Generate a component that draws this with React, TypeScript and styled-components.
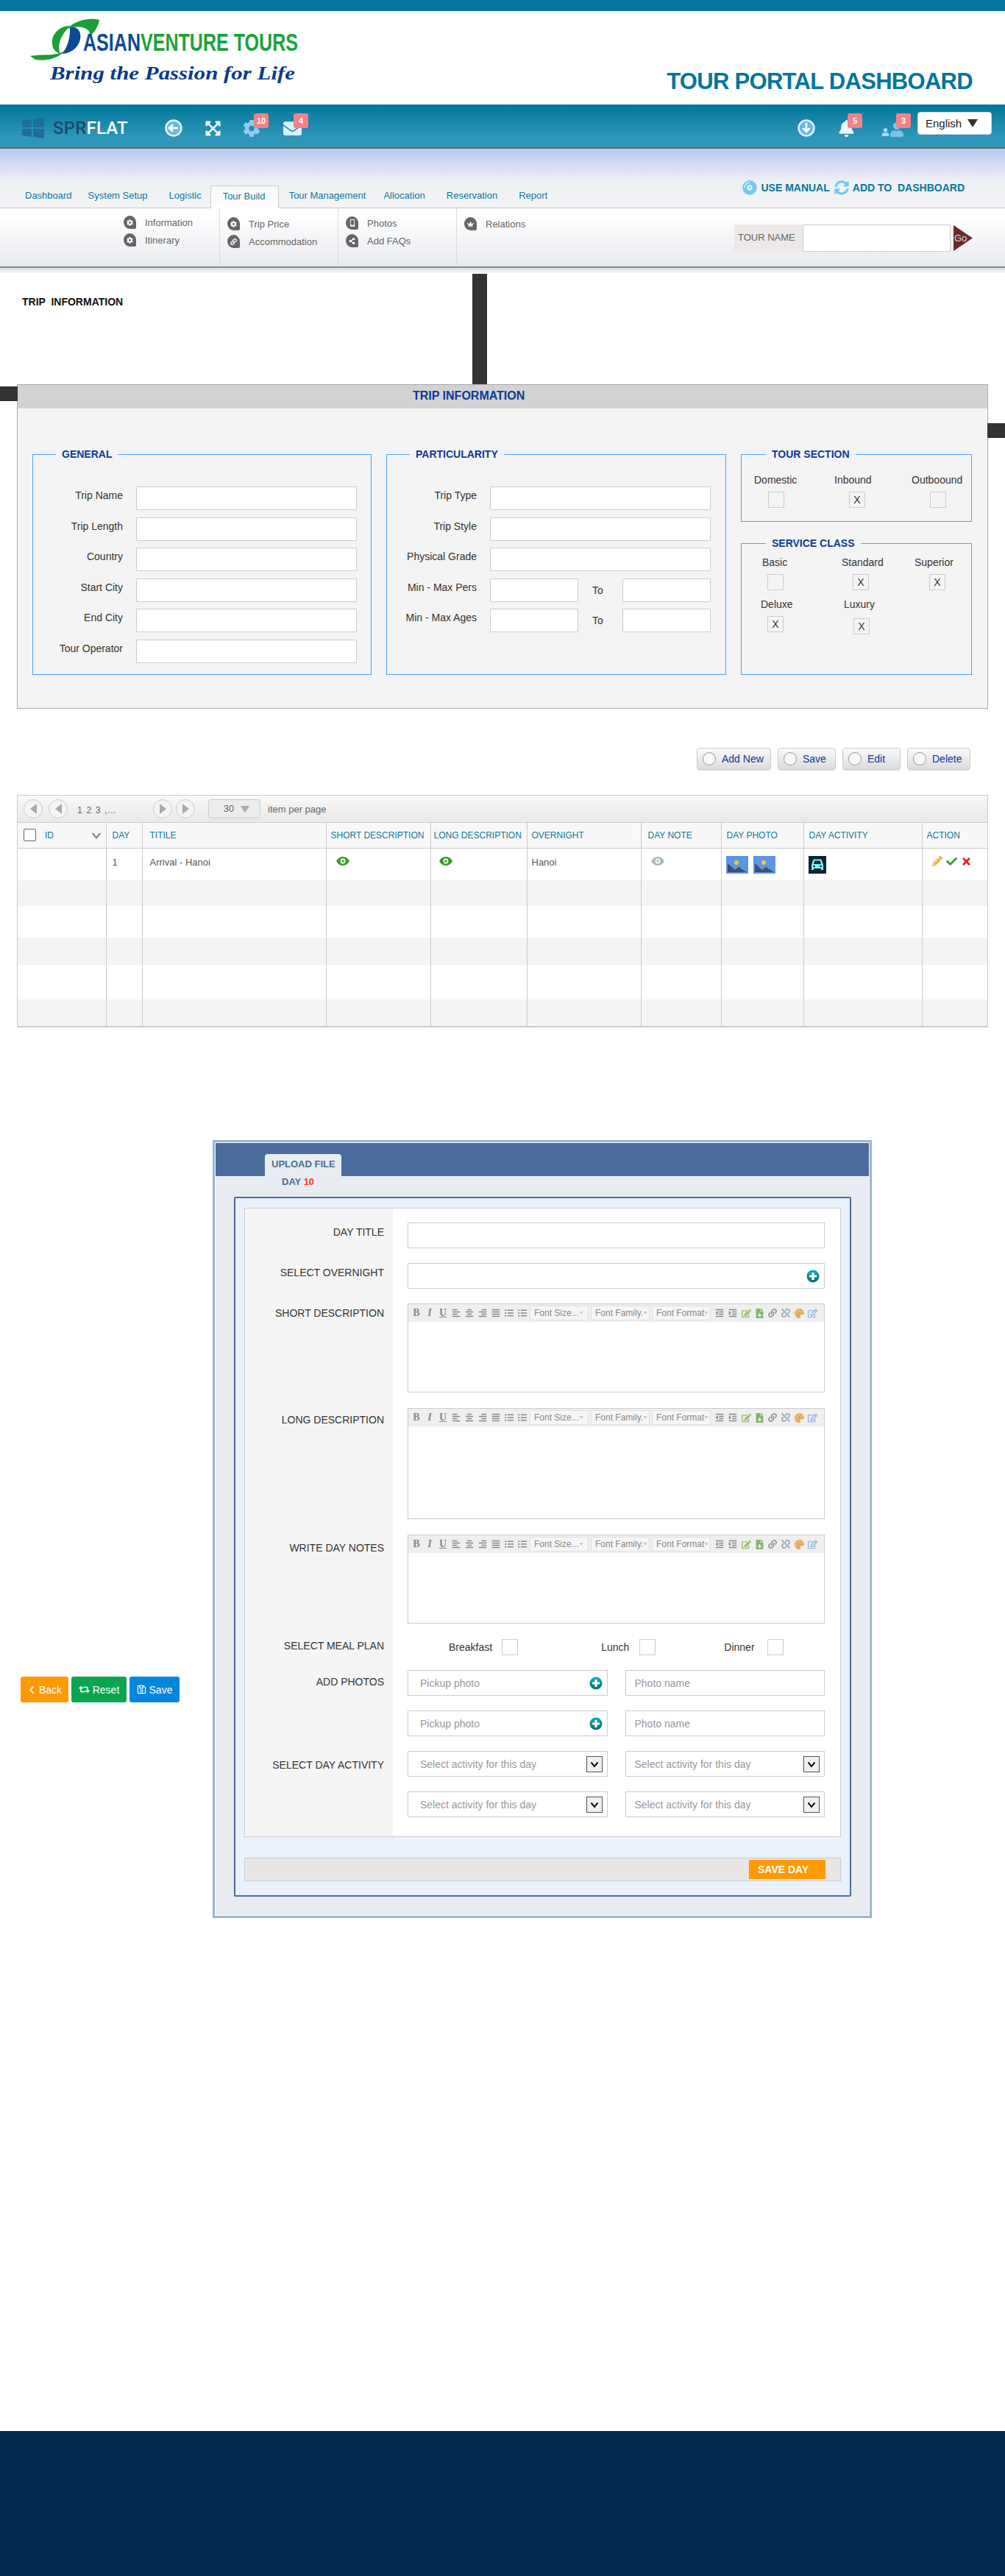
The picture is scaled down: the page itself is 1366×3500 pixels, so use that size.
import React from 'react';
import styled, { createGlobalStyle } from 'styled-components';
import {
  FaAlignCenter, FaAlignJustify, FaAlignLeft, FaAlignRight, FaBell, FaCheck, FaChevronLeft, FaCog,
  FaCompactDisc, FaCrown, FaEdit, FaEnvelope, FaExpandArrowsAlt, FaFileDownload, FaIndent, FaLink,
  FaListUl, FaMobileAlt, FaOutdent, FaPalette, FaPencilAlt, FaRegEdit, FaRegSave, FaRetweet,
  FaShareAlt, FaSyncAlt, FaTimes, FaUnlink, FaUser,
} from 'react-icons/fa';

const GlobalStyle = createGlobalStyle`
  html, body { margin: 0; padding: 0; background: #fff; }
  body { font-family: "Liberation Sans", Arial, sans-serif; color: #333; }
  * { box-sizing: border-box; }
`;

const TEAL = '#02769b';
const NAVY = '#0a3a9a';
const SLATE = '#4a6c9c';

/* ---------- header ---------- */
const TopStrip = styled.div`height: 15px; background: ${TEAL};`;

const BrandRow = styled.div`
  height: 127px;
  display: flex;
  justify-content: space-between;
  align-items: flex-end;
  padding-right: 44px;
`;

const PortalTitle = styled.h1`
  margin: 0 0 13px;
  font-size: 31px;
  line-height: 36px;
  letter-spacing: -0.7px;
  font-weight: 700;
  color: ${TEAL};
`;

const TopBar = styled.div`
  height: 60px;
  display: flex;
  align-items: center;
  padding: 8px 17px 2px 30px;
  background: linear-gradient(#02769b, #2e96b8 75%);
  border-bottom: 2px solid #666;
`;

const ProductName = styled.div`
  width: 96px;
  margin-left: 12px;
  font-family: Roboto, sans-serif;
  font-weight: 500;
  font-size: 24px;
  letter-spacing: 0.2px;
  color: #fff;
  span { color: #1d4a6e; }
`;

const IconSlot = styled.div<{ $w: number; $ml: number }>`
  position: relative;
  width: ${p => p.$w}px;
  height: 24px;
  margin-left: ${p => p.$ml}px;
  display: flex;
  align-items: center;
  justify-content: center;
  color: #c9ebfb;
`;

const Badge = styled.span<{ $left: number }>`
  position: absolute;
  top: -8px;
  left: ${p => p.$left}px;
  width: 20px;
  height: 20px;
  border-radius: 3px;
  background: #f58087;
  color: #fff;
  font-size: 11px;
  font-weight: 700;
  line-height: 20px;
  text-align: center;
`;

const SmallUser = styled(FaUser)`margin-top: 10px; flex: none;`;
const BigUser = styled(FaUser)`margin-top: 4px; flex: none;`;

const LangBox = styled.div`
  width: 101px;
  height: 31px;
  margin: -13px 0 0 19px;
  padding-left: 10px;
  display: flex;
  align-items: center;
  justify-content: space-between;
  padding-right: 18px;
  background: #fff;
  border: 1px solid #cfd8dc;
  border-radius: 4px;
  font-size: 15px;
  color: #222;
`;

const LangArrow = styled.i`
  width: 0;
  height: 0;
  border-left: 7px solid transparent;
  border-right: 7px solid transparent;
  border-top: 11px solid #333;
`;

/* ---------- navigation ---------- */
const NavStrip = styled.div`
  height: 81px;
  display: flex;
  align-items: flex-end;
  padding-left: 34px;
  background: linear-gradient(#b9c8ee, #eef0f5 55%, #f3f4f6);
  border-bottom: 1px solid #c8c8c8;
`;

const NavTab = styled.div<{ $ml: number; $active?: boolean }>`
  height: 31px;
  margin-left: ${p => p.$ml}px;
  margin-bottom: ${p => (p.$active ? '-1px' : '0')};
  width: ${p => (p.$active ? '93px' : 'auto')};
  padding-left: ${p => (p.$active ? '16px' : '0')};
  line-height: ${p => (p.$active ? '28px' : '29px')};
  font-size: 13px;
  color: #0a7a9b;
  white-space: nowrap;
  background: ${p => (p.$active ? 'linear-gradient(#f7f8fa, #fff)' : 'none')};
  border: ${p => (p.$active ? '1px solid #ccc' : 'none')};
  border-bottom: none;
  border-radius: 3px 3px 0 0;
`;

const ManualLinks = styled.div`
  margin: 0 55px 17px auto;
  height: 20px;
  display: flex;
  align-items: center;
  font-size: 14px;
  font-weight: 700;
  color: #05789b;
  white-space: pre;
  svg { color: #6ccbf2; margin-right: 5px; }
  span + svg { margin-left: 6px; }
`;

const SubBar = styled.div`
  height: 81px;
  display: flex;
  background: linear-gradient(#fff 10%, #e8eaef);
  border-bottom: 2px solid #888;
`;

const SubGroup = styled.div<{ $x: number; $w: number; $top: number; $rule?: boolean }>`
  width: ${p => p.$w}px;
  margin-left: ${p => p.$x}px;
  padding: ${p => p.$top}px 0 0 10px;
  border-left: ${p => (p.$rule ? '1px solid #dcdcdc' : 'none')};
`;

const SubItem = styled.div`
  height: 24px;
  display: flex;
  align-items: center;
  gap: 12px;
  font-size: 13px;
  color: #666;
  white-space: nowrap;
`;

const SubIcon = styled.span`
  width: 17px;
  height: 18px;
  flex: none;
  display: flex;
  align-items: center;
  justify-content: center;
  background: #666;
  color: #fff;
  border-radius: 50% 50% 2px 50%;
`;

const TourSearch = styled.div`
  margin: 22px 0 0 auto;
  padding-right: 44px;
  display: flex;
  align-items: flex-start;
`;

const TourLabel = styled.div`
  width: 93px;
  height: 37px;
  padding-left: 5px;
  background: #eee9e9;
  font-size: 13px;
  line-height: 36px;
  color: #666;
`;

const TourInput = styled.input`
  width: 201px;
  height: 37px;
  background: #fff;
  border: 1px solid #ccc;
  border-radius: 1px;
`;

const GoArrow = styled.div`
  position: relative;
  width: 26px;
  height: 35px;
  margin: 1px 0 0 4px;
  background: #6b2a2a;
  clip-path: polygon(0 0, 100% 50%, 0 100%);
  color: #ddd;
  font-size: 13px;
  line-height: 35px;
  padding-left: 1px;
`;

const NavFade = styled.div`height: 7px; background: linear-gradient(#dfe3e8, #f4f5f7);`;

/* ---------- trip information ---------- */
const InfoHead = styled.div`
  position: relative;
  height: 151px;
  padding: 30px 0 0 30px;
  font-size: 14px;
  font-weight: 700;
  line-height: 18px;
  color: #111;
  white-space: pre;
`;

const DarkPost = styled.i`
  position: absolute;
  left: 642px;
  top: 1px;
  width: 20px;
  height: 150px;
  background: #333;
`;

const Panel = styled.section`
  position: relative;
  margin: 0 23px;
  height: 441px;
  background: #f4f4f4;
  border: 1px solid #aaa;
  &::before, &::after {
    content: '';
    position: absolute;
    width: 24px;
    height: 20px;
    background: #333;
  }
  &::before { left: -24px; top: 2px; }
  &::after { right: -24px; top: 52px; }
`;

const PanelTitle = styled.h2`
  margin: 0;
  height: 32px;
  padding-left: 537px;
  background: #d2d2d2;
  color: #0a3a9a;
  font-size: 16px;
  line-height: 29px;
`;

const GroupRow = styled.div`
  display: flex;
  gap: 20px;
  padding: 62px 0 0 20px;
`;

const Group = styled.div<{ $w: number; $h: number; $top: number }>`
  position: relative;
  width: ${p => p.$w}px;
  height: ${p => p.$h}px;
  padding-top: ${p => p.$top}px;
  border: 1px solid #4aa3ff;
`;

const Legend = styled.span<{ $left?: number }>`
  position: absolute;
  top: -10px;
  left: ${p => p.$left ?? 31}px;
  padding: 0 8px;
  background: #f4f4f4;
  color: #0a3a9a;
  font-size: 14px;
  font-weight: 700;
  line-height: 18px;
  white-space: nowrap;
`;

const FieldRows = styled.div`display: flex; flex-direction: column; gap: 9.6px;`;

const FieldRow = styled.div`display: flex; height: 32px; align-items: flex-start;`;

const FieldLabel = styled.label`
  width: 122px;
  margin-right: 18px;
  font-size: 14px;
  line-height: 24px;
  text-align: right;
  color: #333;
  white-space: nowrap;
`;

const TextInput = styled.input<{ $w: number }>`
  width: ${p => p.$w}px;
  height: 32px;
  background: #fff;
  border: 1px solid #ccc;
  border-radius: 1px;
`;

const ToLabel = styled.span`
  width: 60px;
  padding-left: 19px;
  font-size: 14px;
  line-height: 32px;
`;

const SideCol = styled.div`display: flex; flex-direction: column; gap: 29px;`;

const CheckGrid = styled.div`
  display: grid;
  grid-template-columns: 111px 110px 92px;
  row-gap: 10px;
`;

const CheckCell = styled.div<{ $label: number; $box: number; $gap?: number }>`
  font-size: 14px;
  line-height: 18px;
  color: #333;
  white-space: nowrap;
  span { display: block; margin-left: ${p => p.$label}px; }
  b {
    display: block;
    width: 22px;
    height: 22px;
    margin: ${p => p.$gap ?? 7}px 0 0 ${p => p.$box}px;
    border: 1px solid #ccc;
    font-size: 14px;
    font-weight: 400;
    line-height: 20px;
    text-align: center;
  }
`;

/* ---------- day table ---------- */
const ActionBar = styled.div`
  display: flex;
  justify-content: flex-end;
  gap: 9px;
  margin-top: 53px;
  padding-right: 47px;
`;

const ActionButton = styled.button<{ $w: number }>`
  width: ${p => p.$w}px;
  height: 30px;
  display: flex;
  align-items: center;
  gap: 8px;
  padding: 0 0 0 7px;
  background: linear-gradient(#fafafa, #dcdcdc);
  border: 1px solid #ccc;
  border-radius: 4px;
  box-shadow: 0 1px 1px rgba(0, 0, 0, 0.12);
  color: ${NAVY};
  font: 14px "Liberation Sans", Arial, sans-serif;
  i { width: 18px; height: 18px; border: 1px solid #999; border-radius: 50%; background: #f8f8f8; }
`;

const TableWrap = styled.div`
  margin: 34px 23px 0;
  border: 1px solid #ccc;
  border-bottom: 2px solid #ccc;
`;

const Pager = styled.div`
  height: 37px;
  display: flex;
  align-items: center;
  padding-left: 8px;
  background: linear-gradient(#f9f9f9, #e8e8e8);
  border-bottom: 1px solid #ccc;
  font-size: 12.5px;
  color: #666;
`;

const PageArrow = styled.span<{ $ml: number; $next?: boolean }>`
  width: 26px;
  height: 26px;
  margin-left: ${p => p.$ml}px;
  display: flex;
  align-items: center;
  justify-content: center;
  border: 1px solid #ccc;
  border-radius: 50%;
  background: #f4f4f4;
  &::before {
    content: '';
    border-top: 7px solid transparent;
    border-bottom: 7px solid transparent;
    border-${p => (p.$next ? 'left' : 'right')}: 9px solid #aaa;
  }
`;

const PageNumbers = styled.span`
  width: 103px;
  margin: 4px 0 0 13px;
  letter-spacing: 0.5px;
  word-spacing: 1px;
`;

const PageSize = styled.span`
  width: 71px;
  height: 26px;
  margin-left: 18px;
  padding: 0 14px 0 20px;
  display: flex;
  align-items: center;
  justify-content: space-between;
  border: 1px solid #ccc;
  border-radius: 4px;
  background: #ececec;
  &::after {
    content: '';
    border-left: 6px solid transparent;
    border-right: 6px solid transparent;
    border-top: 9px solid #aaa;
  }
`;

const PageLabel = styled.span`margin-left: 10px; font-size: 13px;`;

const DayTable = styled.table`
  width: 100%;
  table-layout: fixed;
  border-collapse: collapse;
`;

const HeadCell = styled.th<{ $pad: number }>`
  height: 34px;
  padding: 0 0 0 ${p => p.$pad}px;
  background: #f8f8f8;
  border-left: 1px solid #ccc;
  border-bottom: 1px solid #ccc;
  color: #0a7b9b;
  font-size: 12px;
  font-weight: 400;
  text-align: left;
  white-space: nowrap;
  &:first-child { border-left: none; }
`;

const IdHead = styled.div`
  display: flex;
  align-items: center;
  i { width: 17px; height: 17px; margin-right: 12px; background: #fff; border: 1px solid #666; border-radius: 2px; }
  svg { margin-left: auto; margin-right: 6px; }
`;

const DayRow = styled.tr<{ $h: number; $alt: boolean }>`
  height: ${p => p.$h}px;
  background: ${p => (p.$alt ? '#f4f4f4' : '#fff')};
`;

const DayCell = styled.td<{ $pad?: number }>`
  padding: 10px 0 0 ${p => p.$pad ?? 0}px;
  vertical-align: top;
  border-left: 1px solid #ccc;
  font-size: 13px;
  line-height: 18px;
  color: #555;
  &:first-child { border-left: none; }
`;

const CellIcons = styled.div<{ $gap?: number }>`
  display: flex;
  align-items: center;
  gap: ${p => p.$gap ?? 7}px;
`;

/* ---------- day form ---------- */
const FormSection = styled.div`
  display: flex;
  margin-top: 153px;
`;

const SideButtons = styled.div`
  width: 289px;
  padding: 729px 0 0 28px;
  display: flex;
  gap: 4px;
  align-items: flex-start;
`;

const SideButton = styled.button<{ $bg: string; $w: number }>`
  width: ${p => p.$w}px;
  height: 35px;
  display: flex;
  align-items: center;
  justify-content: center;
  gap: 4px;
  padding: 0;
  border: none;
  border-radius: 3px;
  background: ${p => p.$bg};
  color: #fff;
  font: 14px "Liberation Sans", Arial, sans-serif;
`;

const FormOuter = styled.div`
  width: 896px;
  height: 1057px;
  border: 3px solid #9ab4d0;
  background: #e8ecf0;
  box-shadow: inset 0 0 0 1px #fff;
  padding: 1px;
`;

const FormHead = styled.div`
  height: 45px;
  padding-left: 67px;
  display: flex;
  align-items: flex-end;
  background: ${SLATE};
`;

const UploadTab = styled.div`
  width: 104px;
  height: 30px;
  padding-left: 9px;
  border-radius: 4px 4px 0 0;
  background: #e8ecf0;
  color: ${SLATE};
  font-size: 13px;
  font-weight: 700;
  line-height: 28px;
`;

const DayLine = styled.div`
  height: 28px;
  padding-left: 90px;
  color: ${SLATE};
  font-size: 13px;
  font-weight: 700;
  line-height: 16px;
  span { color: #f33; }
`;

const FormBox = styled.div`
  width: 839px;
  height: 951px;
  margin-left: 25px;
  padding: 13px 12px 0;
  background: #e8f1fc;
  border: 2px solid ${SLATE};
  border-radius: 2px;
`;

const FormPanel = styled.div`
  height: 855px;
  background: #fff;
  border: 1px solid #ccc;
  display: flex;
  flex-direction: column;
`;

const FormRow = styled.div<{ $grow?: boolean }>`
  display: grid;
  grid-template-columns: 201px 1fr;
  flex-grow: ${p => (p.$grow ? 1 : 0)};
`;

const RowLabel = styled.div<{ $top: number; $pad: number }>`
  padding: ${p => p.$pad + p.$top}px 12px 0 0;
  background: #f5f5f5;
  font-size: 14px;
  line-height: 18px;
  color: #333;
  text-align: right;
`;

const RowBody = styled.div<{ $pad: number }>`
  padding: ${p => p.$pad}px 21px 0 20px;
  display: flex;
  flex-direction: column;
  gap: 20px;
`;

const WideInput = styled.div<{ $left?: number }>`
  position: relative;
  height: 35px;
  padding: 0 6px 0 ${p => p.$left ?? 12}px;
  display: flex;
  align-items: center;
  justify-content: space-between;
  background: #fff;
  border: 1px solid #ccc;
  font-size: 14px;
  color: #999;
`;

const Pair = styled.div`
  display: grid;
  grid-template-columns: 1fr 1fr;
  column-gap: 24px;
`;

const SelectButton = styled.span`
  width: 22px;
  height: 22px;
  display: flex;
  align-items: center;
  justify-content: center;
  background: #f0f0f0;
  border: 1px solid #555;
  color: #111;
`;

const Editor = styled.div<{ $h: number }>`
  height: ${p => p.$h}px;
  border: 1px solid #ccc;
  background: #fff;
`;

const EditorBar = styled.div`
  height: 24px;
  display: flex;
  align-items: center;
  padding-left: 2px;
  background: #efefef;
`;

const ToolSlot = styled.span<{ $c?: string }>`
  width: 18px;
  height: 18px;
  flex: none;
  display: flex;
  align-items: center;
  justify-content: center;
  color: ${p => p.$c ?? '#888'};
  font-family: "Liberation Serif", serif;
  font-weight: 700;
  font-size: 14px;
`;

const ToolSelect = styled.span`
  width: 80px;
  height: 20px;
  margin: 0 3px 0 0;
  padding: 0 6px 0 5px;
  display: flex;
  align-items: center;
  justify-content: space-between;
  background: #f6f6f6;
  border: 1px solid #e0e0e0;
  color: #888;
  font-size: 12px;
  white-space: nowrap;
  &:nth-child(10) { margin-left: 1px; }
  &::after {
    content: '';
    border-left: 3px solid transparent;
    border-right: 3px solid transparent;
    border-top: 4px solid #ccc;
  }
`;

const MealRow = styled.div`display: flex; height: 22px; align-items: center;`;

const MealItem = styled.div<{ $ml: number; $gap: number }>`
  display: flex;
  align-items: center;
  gap: ${p => p.$gap}px;
  margin-left: ${p => p.$ml}px;
  font-size: 14px;
  color: #333;
  i { width: 22px; height: 22px; border: 1px solid #ccc; }
`;

const SaveBar = styled.div`
  height: 32px;
  margin-top: 28px;
  padding-right: 20px;
  display: flex;
  align-items: center;
  justify-content: flex-end;
  background: #e9e6e6;
  border: 1px solid #ccc;
`;

const SaveDay = styled.button`
  width: 104px;
  height: 26px;
  padding: 0 0 0 12px;
  border: none;
  background: #f90;
  color: #fff;
  font: 700 14px "Liberation Sans", Arial, sans-serif;
  text-align: left;
`;

const Footer = styled.footer`
  height: 197px;
  margin-top: 697px;
  background: #022b4f;
`;

/* ---------- drawings ---------- */
const Logo = () => (
  <svg width="420" height="127" viewBox="0 0 420 127">
    <path d="M96 20C80 20 70 32 71 44c0 8 5 12 11 14-4-8-2-24 14-38z" fill="#1a9e35" />
    <path d="M95 22c13-2 17 10 13 20-4 10-14 16-24 16 8-8 12-24 11-36z" fill="#0a4a96" />
    <path d="M92 24c8-10 28-16 43-12-1 8-7 18-13 22 2-10-12-16-30-10z" fill="#1a9e35" />
    <path d="M41 61c19-3 34 1 47-7-10 12-28 14-40 12z" fill="#1a9e35" />
    <text transform="translate(113 54) scale(0.76 1)" fill="#1aa33a" fontFamily="Liberation Sans, Arial, sans-serif"
      fontWeight="700" fontSize="33"><tspan fill="#0a4a96">ASIAN</tspan>VENTURE TOURS</text>
    <text x="68" y="93" fill="#0a3a8c" fontFamily="Liberation Serif, serif" fontWeight="700" fontStyle="italic"
      fontSize="25" textLength="333" lengthAdjust="spacingAndGlyphs">Bring the Passion for Life</text>
  </svg>
);

const WindowsMark = () => (
  <svg width="30" height="28" viewBox="0 0 30 28" fill="#1e6d9c">
    <path d="M0 4l13-2v11H0zM15 2l15-2v13H15zM0 15h13v11L0 24zM15 15h15v13l-15-2z" />
  </svg>
);

const RoundArrow = ({ down }: { down?: boolean }) => (
  <svg width="24" height="24" viewBox="0 0 24 24">
    <circle cx="12" cy="12" r="10.5" fill="#6fb6e6" stroke="#e2f3fd" strokeWidth="2.4" />
    <path d={down ? 'M12 5v10M7.5 12l4.500 5 4.500-5' : 'M18 12H8M11 7.500l-5 4.500 5 4.500'} stroke="#fff" strokeWidth="2.6" fill="none" />
  </svg>
);

const Eye = ({ pale }: { pale?: boolean }) => (
  <svg width="18" height="14" viewBox="0 0 18 14">
    <path d="M0 7c4-8 14-8 18 0-4 8-14 8-18 0z" fill={pale ? '#a6c0a6' : '#3a9a28'} />
    <circle cx="9" cy="7" r="3.400" fill="#fff" />
    <circle cx="9" cy="7" r="1.700" fill={pale ? '#a6c0a6' : '#3a9a28'} />
  </svg>
);

const PhotoTile = () => (
  <svg width="30" height="24" viewBox="0 0 30 24">
    <rect width="30" height="24" fill="#5b95e6" />
    <circle cx="14" cy="9" r="3" fill="#ffc62e" />
    <path d="M2 22V10l10 9 5-4 11 7z" fill="#44506a" />
  </svg>
);

const CarTile = () => (
  <svg width="24" height="24" viewBox="0 0 24 24">
    <rect width="24" height="24" fill="#0f2339" />
    <path d="M4 12l2-6c.3-1 1-1.500 2-1.500h8c1 0 1.700.5 2 1.500l2 6v7h-3v-2H7v2H4z" fill="#7ff0f5" />
    <path d="M7 11l1.200-4.500h7.600L17 11z" fill="#0f2339" />
    <circle cx="7.500" cy="14" r="1.300" fill="#0f2339" />
    <circle cx="16.500" cy="14" r="1.300" fill="#0f2339" />
  </svg>
);

const PlusDot = () => (
  <svg width="18" height="18" viewBox="0 0 18 18">
    <defs>
      <linearGradient id="plusFill" x1="0" y1="0" x2="0" y2="1">
        <stop offset="0" stopColor="#10b5b0" />
        <stop offset="1" stopColor="#036b6e" />
      </linearGradient>
    </defs>
    <circle cx="9" cy="9" r="8.500" fill="url(#plusFill)" />
    <path d="M9 4v10M4 9h10" stroke="#fff" strokeWidth="3.200" />
  </svg>
);

const Chevron = ({ size = 12, color = 'currentColor' }: { size?: number; color?: string }) => (
  <svg width={size} height={size} viewBox="0 0 12 12">
    <path d="M1.500 3.500L6 9l4.500-5.500" fill="none" stroke={color} strokeWidth="2" />
  </svg>
);

/* ---------- data ---------- */
const generalFields = ['Trip Name', 'Trip Length', 'Country', 'Start City', 'End City', 'Tour Operator'];

const headCols = [
  { w: 120, pad: 8, label: '' },
  { w: 49, pad: 8, label: 'DAY' },
  { w: 250, pad: 10, label: 'TITILE' },
  { w: 142, pad: 6, label: 'SHORT DESCRIPTION' },
  { w: 131, pad: 4, label: 'LONG DESCRIPTION' },
  { w: 155, pad: 6, label: 'OVERNIGHT' },
  { w: 109, pad: 9, label: 'DAY NOTE' },
  { w: 112, pad: 7, label: 'DAY PHOTO' },
  { w: 161, pad: 7, label: 'DAY ACTIVITY' },
  { w: 89, pad: 6, label: 'ACTION' },
];

const emptyRows = [35, 43, 37, 47, 36];

const RichEditor = ({ height }: { height: number }) => (
  <Editor $h={height}>
    <EditorBar>
      <ToolSlot>B</ToolSlot>
      <ToolSlot><i>I</i></ToolSlot>
      <ToolSlot><u>U</u></ToolSlot>
      <ToolSlot><FaAlignLeft size={12} /></ToolSlot>
      <ToolSlot><FaAlignCenter size={12} /></ToolSlot>
      <ToolSlot><FaAlignRight size={12} /></ToolSlot>
      <ToolSlot><FaAlignJustify size={12} /></ToolSlot>
      <ToolSlot><FaListUl size={12} /></ToolSlot>
      <ToolSlot><FaListUl size={12} /></ToolSlot>
      <ToolSelect>Font Size...</ToolSelect>
      <ToolSelect>Font Family.</ToolSelect>
      <ToolSelect>Font Format</ToolSelect>
      <ToolSlot><FaOutdent size={12} /></ToolSlot>
      <ToolSlot><FaIndent size={12} /></ToolSlot>
      <ToolSlot $c="#9bbf6a"><FaEdit size={13} /></ToolSlot>
      <ToolSlot $c="#7fb56a"><FaFileDownload size={13} /></ToolSlot>
      <ToolSlot $c="#999"><FaLink size={12} /></ToolSlot>
      <ToolSlot $c="#9ab"><FaUnlink size={12} /></ToolSlot>
      <ToolSlot $c="#e8a860"><FaPalette size={13} /></ToolSlot>
      <ToolSlot $c="#7fb0e0"><FaRegEdit size={13} /></ToolSlot>
    </EditorBar>
  </Editor>
);

const App: React.FC = () => (
  <>
    <GlobalStyle />
    <TopStrip />
    <BrandRow>
      <Logo />
      <PortalTitle>TOUR PORTAL DASHBOARD</PortalTitle>
    </BrandRow>
    <TopBar>
      <WindowsMark />
      <ProductName><span>SPR</span>FLAT</ProductName>
      <IconSlot $w={24} $ml={56}><RoundArrow /></IconSlot>
      <IconSlot $w={24} $ml={29}><FaExpandArrowsAlt size={23} color="#eaf7fd" /></IconSlot>
      <IconSlot $w={24} $ml={29}><FaCog size={25} color="#8ccdf0" /><Badge $left={15}>10</Badge></IconSlot>
      <IconSlot $w={25} $ml={31}><FaEnvelope size={25} color="#d6f0fc" /><Badge $left={14}>4</Badge></IconSlot>
      <IconSlot $w={24} $ml={674}><RoundArrow down /></IconSlot>
      <IconSlot $w={24} $ml={30}><FaBell size={23} color="#eaf7fd" /><Badge $left={14}>5</Badge></IconSlot>
      <IconSlot $w={29} $ml={37}>
        <SmallUser size={11} color="#a9dcf7" />
        <BigUser size={20} color="#7cc2ee" />
        <Badge $left={19}>3</Badge>
      </IconSlot>
      <LangBox>English<LangArrow /></LangBox>
    </TopBar>
    <NavStrip>
      <NavTab $ml={0}>Dashboard</NavTab>
      <NavTab $ml={22}>System Setup</NavTab>
      <NavTab $ml={29}>Logistic</NavTab>
      <NavTab $ml={12} $active>Tour Build</NavTab>
      <NavTab $ml={14}>Tour Management</NavTab>
      <NavTab $ml={24}>Allocation</NavTab>
      <NavTab $ml={29}>Reservation</NavTab>
      <NavTab $ml={29}>Report</NavTab>
      <ManualLinks>
        <FaCompactDisc size={20} />
        <span>USE MANUAL</span>
        <FaSyncAlt size={20} />
        <span>ADD TO  DASHBOARD</span>
      </ManualLinks>
    </NavStrip>
    <SubBar>
      <SubGroup $x={158} $w={130} $top={7}>
        <SubItem><SubIcon><FaCog size={9} /></SubIcon>Information</SubItem>
        <SubItem><SubIcon><FaCog size={9} /></SubIcon>Itinerary</SubItem>
      </SubGroup>
      <SubGroup $x={10} $w={161} $top={9} $rule>
        <SubItem><SubIcon><FaCog size={9} /></SubIcon>Trip Price</SubItem>
        <SubItem><SubIcon><FaLink size={9} /></SubIcon>Accommodation</SubItem>
      </SubGroup>
      <SubGroup $x={0} $w={161} $top={8} $rule>
        <SubItem><SubIcon><FaMobileAlt size={10} /></SubIcon>Photos</SubItem>
        <SubItem><SubIcon><FaShareAlt size={9} /></SubIcon>Add FAQs</SubItem>
      </SubGroup>
      <SubGroup $x={0} $w={160} $top={9} $rule>
        <SubItem><SubIcon><FaCrown size={9} /></SubIcon>Relations</SubItem>
      </SubGroup>
      <TourSearch>
        <TourLabel>TOUR NAME</TourLabel>
        <TourInput />
        <GoArrow>Go</GoArrow>
      </TourSearch>
    </SubBar>
    <NavFade />
    <InfoHead>
      TRIP  INFORMATION
      <DarkPost />
    </InfoHead>
    <Panel>
      <PanelTitle>TRIP INFORMATION</PanelTitle>
      <GroupRow>
        <Group $w={461} $h={300} $top={43}>
          <Legend>GENERAL</Legend>
          <FieldRows>
            {generalFields.map(name => (
              <FieldRow key={name}>
                <FieldLabel>{name}</FieldLabel>
                <TextInput $w={300} />
              </FieldRow>
            ))}
          </FieldRows>
        </Group>
        <Group $w={462} $h={300} $top={43}>
          <Legend>PARTICULARITY</Legend>
          <FieldRows>
            {['Trip Type', 'Trip Style', 'Physical Grade'].map(name => (
              <FieldRow key={name}>
                <FieldLabel>{name}</FieldLabel>
                <TextInput $w={300} />
              </FieldRow>
            ))}
            {['Min - Max Pers', 'Min - Max Ages'].map(name => (
              <FieldRow key={name}>
                <FieldLabel>{name}</FieldLabel>
                <TextInput $w={120} />
                <ToLabel>To</ToLabel>
                <TextInput $w={120} />
              </FieldRow>
            ))}
          </FieldRows>
        </Group>
        <SideCol>
          <Group $w={314} $h={92} $top={25}>
            <Legend $left={33}>TOUR SECTION</Legend>
            <CheckGrid>
              <CheckCell $label={17} $box={36}><span>Domestic</span><b /></CheckCell>
              <CheckCell $label={15} $box={35}><span>Inbound</span><b>X</b></CheckCell>
              <CheckCell $label={10} $box={35}><span>Outboound</span><b /></CheckCell>
            </CheckGrid>
          </Group>
          <Group $w={314} $h={179} $top={16}>
            <Legend $left={33}>SERVICE CLASS</Legend>
            <CheckGrid>
              <CheckCell $label={28} $box={35}><span>Basic</span><b /></CheckCell>
              <CheckCell $label={25} $box={40}><span>Standard</span><b>X</b></CheckCell>
              <CheckCell $label={14} $box={34}><span>Superior</span><b>X</b></CheckCell>
              <CheckCell $label={26} $box={35}><span>Deluxe</span><b>X</b></CheckCell>
              <CheckCell $label={28} $box={41} $gap={10}><span>Luxury</span><b>X</b></CheckCell>
            </CheckGrid>
          </Group>
        </SideCol>
      </GroupRow>
    </Panel>
    <ActionBar>
      <ActionButton $w={101}><i />Add New</ActionButton>
      <ActionButton $w={79}><i />Save</ActionButton>
      <ActionButton $w={79}><i />Edit</ActionButton>
      <ActionButton $w={86}><i />Delete</ActionButton>
    </ActionBar>
    <TableWrap>
      <Pager>
        <PageArrow $ml={0} />
        <PageArrow $ml={8} />
        <PageNumbers>1 2 3 ,...</PageNumbers>
        <PageArrow $ml={0} $next />
        <PageArrow $ml={5} $next />
        <PageSize>30</PageSize>
        <PageLabel>item per page</PageLabel>
      </Pager>
      <DayTable>
        <colgroup>
          {headCols.map(col => <col key={col.label} width={col.w} />)}
        </colgroup>
        <thead>
          <tr>
            {headCols.map((col, i) => (
              <HeadCell key={col.label} $pad={col.pad}>
                {i === 0 ? <IdHead><i />ID<Chevron size={14} color="#888" /></IdHead> : col.label}
              </HeadCell>
            ))}
          </tr>
        </thead>
        <tbody>
          <DayRow $h={44} $alt={false}>
            <DayCell />
            <DayCell $pad={8}>1</DayCell>
            <DayCell $pad={10}>Arrival - Hanoi</DayCell>
            <DayCell $pad={13}><CellIcons><Eye /></CellIcons></DayCell>
            <DayCell $pad={11}><CellIcons><Eye /></CellIcons></DayCell>
            <DayCell $pad={6}>Hanoi</DayCell>
            <DayCell $pad={13}><CellIcons><Eye pale /></CellIcons></DayCell>
            <DayCell $pad={6}><CellIcons><PhotoTile /><PhotoTile /></CellIcons></DayCell>
            <DayCell $pad={6}><CellIcons><CarTile /></CellIcons></DayCell>
            <DayCell $pad={13}>
              <CellIcons $gap={5}>
                <FaPencilAlt size={14} color="#e8b23a" />
                <FaCheck size={15} color="#3e9a3a" />
                <FaTimes size={15} color="#e52222" />
              </CellIcons>
            </DayCell>
          </DayRow>
          {emptyRows.map((h, r) => (
            <DayRow key={r} $h={h} $alt={r % 2 === 0}>
              {headCols.map(col => <DayCell key={col.label} />)}
            </DayRow>
          ))}
        </tbody>
      </DayTable>
    </TableWrap>
    <FormSection>
      <SideButtons>
        <SideButton $bg="#f90" $w={65}><FaChevronLeft size={12} />Back</SideButton>
        <SideButton $bg="#0ba552" $w={75}><FaRetweet size={15} />Reset</SideButton>
        <SideButton $bg="#0586de" $w={68}><FaRegSave size={13} />Save</SideButton>
      </SideButtons>
      <FormOuter>
        <FormHead><UploadTab>UPLOAD FILE</UploadTab></FormHead>
        <DayLine>DAY <span>10</span></DayLine>
        <FormBox>
          <FormPanel>
            <FormRow>
              <RowLabel $pad={19} $top={4}>DAY TITLE</RowLabel>
              <RowBody $pad={19}><WideInput /></RowBody>
            </FormRow>
            <FormRow>
              <RowLabel $pad={20} $top={4}>SELECT OVERNIGHT</RowLabel>
              <RowBody $pad={20}><WideInput><span /><PlusDot /></WideInput></RowBody>
            </FormRow>
            <FormRow>
              <RowLabel $pad={20} $top={4}>SHORT DESCRIPTION</RowLabel>
              <RowBody $pad={20}><RichEditor height={121} /></RowBody>
            </FormRow>
            <FormRow>
              <RowLabel $pad={21} $top={7}>LONG DESCRIPTION</RowLabel>
              <RowBody $pad={21}><RichEditor height={151} /></RowBody>
            </FormRow>
            <FormRow>
              <RowLabel $pad={21} $top={9}>WRITE DAY NOTES</RowLabel>
              <RowBody $pad={21}><RichEditor height={121} /></RowBody>
            </FormRow>
            <FormRow>
              <RowLabel $pad={21} $top={0}>SELECT MEAL PLAN</RowLabel>
              <RowBody $pad={21}>
                <MealRow>
                  <MealItem $ml={56} $gap={13}>Breakfast<i /></MealItem>
                  <MealItem $ml={113} $gap={14}>Lunch<i /></MealItem>
                  <MealItem $ml={93} $gap={17}>Dinner<i /></MealItem>
                </MealRow>
              </RowBody>
            </FormRow>
            <FormRow>
              <RowLabel $pad={20} $top={7}>ADD PHOTOS</RowLabel>
              <RowBody $pad={20}>
                {[0, 1].map(n => (
                  <Pair key={n}>
                    <WideInput $left={16}>Pickup photo<PlusDot /></WideInput>
                    <WideInput>Photo name</WideInput>
                  </Pair>
                ))}
              </RowBody>
            </FormRow>
            <FormRow $grow>
              <RowLabel $pad={20} $top={10}>SELECT DAY ACTIVITY</RowLabel>
              <RowBody $pad={20}>
                {[0, 1].map(n => (
                  <Pair key={n}>
                    <WideInput $left={16}>Select activity for this day<SelectButton><Chevron /></SelectButton></WideInput>
                    <WideInput>Select activity for this day<SelectButton><Chevron /></SelectButton></WideInput>
                  </Pair>
                ))}
              </RowBody>
            </FormRow>
          </FormPanel>
          <SaveBar><SaveDay>SAVE DAY</SaveDay></SaveBar>
        </FormBox>
      </FormOuter>
    </FormSection>
    <Footer />
  </>
);

export default App;
